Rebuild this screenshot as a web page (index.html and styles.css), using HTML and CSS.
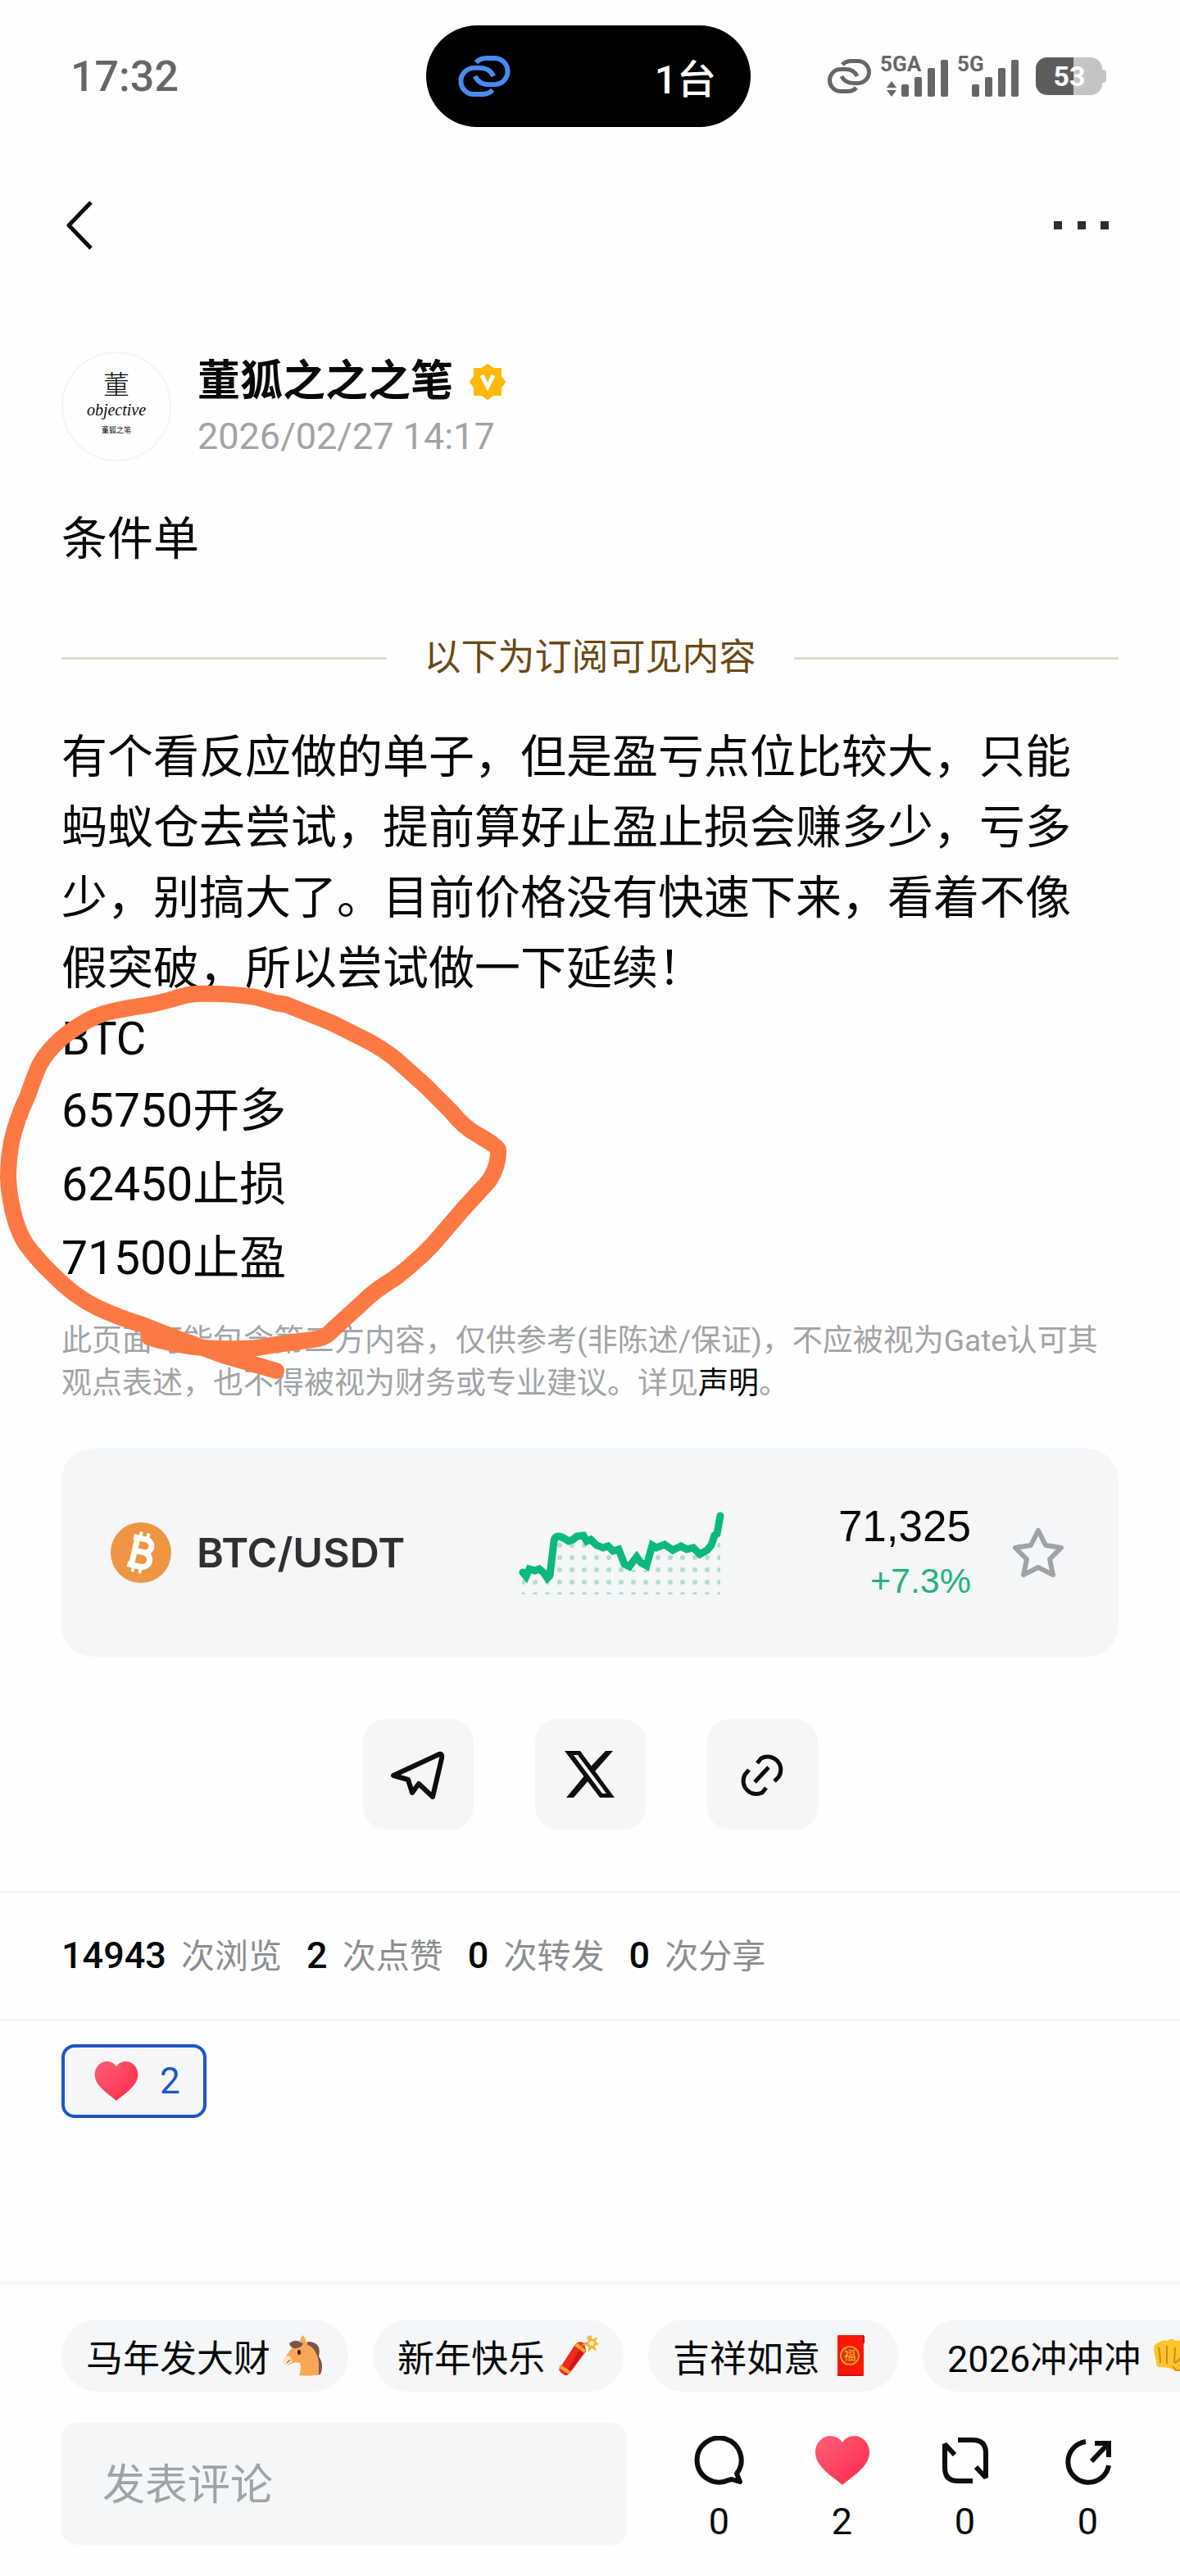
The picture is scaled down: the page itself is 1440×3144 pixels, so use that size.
FILE: index.html
```html
<!DOCTYPE html>
<html lang="zh-CN">
<head>
  <meta charset="UTF-8">
  <meta name="viewport" content="width=device-width, initial-scale=1.0">
  <title>条件单</title>
  <link rel="stylesheet" href="styles.css">
</head>
<body>
  <!-- Status bar -->
  <div class="status-bar">
    <div class="clock">17:32</div>
    <div class="island">
      <svg class="island-icon" viewBox="0 0 55 42" fill="none" stroke="#4a8af4" stroke-width="5">
        <path d="M19 7Q23 2.500 30 2.500H38A13.500 13.500 0 0 1 38 29.500H32Q22 29.500 18 21"/>
        <path d="M36 35Q32 39.500 25 39.500H17A13.500 13.500 0 0 1 17 12.500H23Q33 12.500 37 21"/>
      </svg>
      <span>1台</span>
    </div>
    <div class="indicators">
      <svg width="55" height="42" viewBox="0 0 55 42" fill="none" stroke="#666" stroke-width="5">
        <path d="M19 7Q23 2.500 30 2.500H38A13.500 13.500 0 0 1 38 29.500H32Q22 29.500 18 21"/>
        <path d="M36 35Q32 39.500 25 39.500H17A13.500 13.500 0 0 1 17 12.500H23Q33 12.500 37 21"/>
      </svg>
      <svg class="signal" width="84" height="68" viewBox="0 -8 84 68">
        <text x="0" y="20">5GA</text>
        <path d="M14 32L20 40H8ZM8 43H20L14 51Z"/>
        <rect x="26" y="36" width="9" height="15" rx="2"/>
        <rect x="42" y="27" width="9" height="24" rx="2"/>
        <rect x="58" y="16" width="9" height="35" rx="2"/>
        <rect x="74" y="6" width="9" height="45" rx="2"/>
      </svg>
      <svg class="signal" width="76" height="68" viewBox="0 -8 76 68">
        <text x="0" y="20">5G</text>
        <rect x="18" y="36" width="9" height="15" rx="2"/>
        <rect x="34" y="27" width="9" height="24" rx="2"/>
        <rect x="50" y="16" width="9" height="35" rx="2"/>
        <rect x="66" y="6" width="9" height="45" rx="2"/>
      </svg>
      <svg class="battery" width="86" height="46" viewBox="0 0 86 46">
        <rect width="81" height="46" rx="14" fill="#c4c4c4"/>
        <path d="M80 15h2q4 0 4 4v8q0 4-4 4h-2z" fill="#c4c4c4"/>
        <path d="M14 0H46V46H14A14 14 0 0 1 0 32V14A14 14 0 0 1 14 0Z" fill="#5c5c5c"/>
        <text x="41" y="35" text-anchor="middle">53</text>
      </svg>
    </div>
  </div>

  <!-- Navigation -->
  <nav class="nav">
    <button class="icon-btn" aria-label="返回">
      <svg width="34" height="60" viewBox="0 0 34 60" fill="none" stroke="#0b0d0e" stroke-width="5" stroke-linejoin="round">
        <path d="M31 2L4 30L31 58"/>
      </svg>
    </button>
    <button class="icon-btn" aria-label="更多">
      <svg width="74" height="10" viewBox="0 0 74 10" fill="#2b2e30">
        <rect x="0" width="10" height="10"/>
        <rect x="29" width="10" height="10"/>
        <rect x="57" width="10" height="10"/>
      </svg>
    </button>
  </nav>

  <main>
    <article class="post">
      <!-- Author -->
      <header class="author">
        <div class="avatar">
          <span class="avatar-mark">董</span>
          <span class="avatar-word">objective</span>
          <span class="avatar-name">董狐之笔</span>
        </div>
        <div>
          <div class="author-name">
            董狐之之之笔
            <svg width="44" height="44" viewBox="0 0 44 44">
              <path d="M22 1L29 6H38V15L43 22L38 29V38H29L22 43L15 38H6V29L1 22L6 15V6H15Z" fill="#fdb90b" stroke="#fdb90b" stroke-width="2" stroke-linejoin="round"/>
              <path d="M15 14L22 28L29 14" fill="none" stroke="#fff" stroke-width="5"/>
            </svg>
          </div>
          <time class="author-date">2026/02/27 14:17</time>
        </div>
      </header>

      <h1 class="post-title">条件单</h1>
      <div class="divider">以下为订阅可见内容</div>

      <!-- Post text with the marker circle over it -->
      <div class="post-body">
        <p class="text">有个看反应做的单子，但是盈亏点位比较大，只能蚂蚁仓去尝试，提前算好止盈止损会赚多少，亏多少，别搞大了。目前价格没有快速下来，看着不像假突破，所以尝试做一下延续！</p>
        <p>BTC</p>
        <p class="level">65750开多</p>
        <p class="level">62450止损</p>
        <p class="level">71500止盈</p>
        <p class="disclaimer">此页面可能包含第三方内容，仅供参考(非陈述/保证)，不应被视为Gate认可其观点表述，也不得被视为财务或专业建议。详见<a href="#">声明</a>。</p>
        <svg class="marker" width="640" height="490" viewBox="0 1200 640 490" fill="none" stroke="#fd7943" stroke-width="20" stroke-linecap="round" stroke-linejoin="round">
          <path d="M182 1632L188 1634Q206 1639 230 1643Q262 1647 294 1646Q314 1646 331 1642L388 1634Q398 1632 406 1623L441 1591Q458 1574 482 1560Q508 1540 528 1519L565 1476L597 1441Q609 1422 608 1403Q607 1399 583 1385Q566 1376 551 1357L519 1325L482 1292Q468 1281 450 1271L404 1248L349 1226L336 1224L312 1217Q276 1212 239 1213Q226 1214 212 1219Q198 1223 184 1226Q162 1229 138 1234Q120 1238 106 1246Q88 1256 73 1269Q56 1285 48 1300Q41 1316 34 1337Q20 1366 14 1394Q10 1416 10 1437Q11 1462 18 1487Q23 1505 32 1519Q47 1539 64 1555Q90 1582 119 1596Q145 1608 174 1617L220 1635L275 1655L337 1673"/>
        </svg>
      </div>

      <!-- Market card -->
      <section class="market">
        <svg width="75" height="75" viewBox="0 0 75 75">
          <circle cx="37" cy="37" r="37" fill="#ee9644"/>
          <g transform="rotate(13 37 37)" fill="none" stroke="#fff">
            <path d="M24 20H40A8 8 0 0 1 40 36H29M40 36A9 9 0 0 1 41 54H24M29 20V54" stroke-width="7"/>
            <path d="M32 12V22M41 12V22M32 53V62M41 53V62" stroke-width="4"/>
          </g>
        </svg>
        <span class="pair">BTC/USDT</span>
        <svg class="chart" width="252" height="106" viewBox="0 0 252 106">
          <defs>
            <pattern id="dots" x="-2" y="7" width="15" height="15" patternUnits="userSpaceOnUse">
              <circle cx="7" cy="7" r="3" fill="#b4dccf"/>
            </pattern>
          </defs>
          <path d="M4 77L10 80L34 84L45 37L62 38L80 36L108 50L120 54L134 74L156 74L164 46L188 52L223 52L246 20V104H4Z" fill="url(#dots)"/>
          <path d="M5 77L9 82L13 73L20 75L25 73L30 77L35 84L38 81L43 39Q44 33 49 33Q54 34 61 39Q66 38 71 33L79 32L83 39L88 37L95 44L103 47L109 45L115 51L122 49L129 67L135 70L144 58L149 65L156 69L163 44L168 47L178 43L188 50L198 45L205 49L213 47L221 55L230 50L235 44L239 32L242 30L246 8" fill="none" stroke="#0ab97d" stroke-width="9" stroke-linecap="round"/>
        </svg>
        <div class="quote">
          <div class="price">71,325</div>
          <div class="change">+7.3%</div>
        </div>
        <button class="icon-btn" aria-label="收藏">
          <svg width="64" height="62" viewBox="0 0 64 62" fill="none" stroke="#a0a3a5" stroke-width="6" stroke-linejoin="round">
            <path d="M32 4L41 22L60 25L46 39L50 58L32 49L14 58L18 39L4 25L23 22Z"/>
          </svg>
        </button>
      </section>

      <!-- Share -->
      <div class="share">
        <button class="share-btn" aria-label="Telegram">
          <svg width="68" height="60" viewBox="0 0 68 60" fill="none" stroke="#0b0d0e" stroke-width="6" stroke-linejoin="round">
            <path d="M4 31L60 5Q64 4 63 10L52 57L35 41L27 52L22 36Z"/>
          </svg>
        </button>
        <button class="share-btn" aria-label="X">
          <svg width="62" height="57" viewBox="0 0 62 57">
            <path d="M0 0H19L61 57H43ZM11 5L46 52H51L16 5Z" fill="#0b0d0e" fill-rule="evenodd"/>
            <path d="M50 0H59L36 26L31 20ZM2 57H11L31 34L26 28Z" fill="#0b0d0e"/>
          </svg>
        </button>
        <button class="share-btn" aria-label="复制链接">
          <svg width="56" height="56" viewBox="0 0 56 56" fill="none" stroke="#0b0d0e" stroke-width="5">
            <path d="M22 14L27 8A16 16 0 0 1 48 31L43 36M33 44L28 50A16 16 0 0 1 7 28L12 22M19 37L36 19"/>
          </svg>
        </button>
      </div>
    </article>

    <div class="stats">
      <span><b>14943</b> 次浏览</span>
      <span><b>2</b> 次点赞</span>
      <span><b>0</b> 次转发</span>
      <span><b>0</b> 次分享</span>
    </div>

    <button class="reaction">
      <svg width="54" height="48" viewBox="0 0 66 60">
        <defs>
          <linearGradient id="heart" x1="0" y1="0" x2="1" y2="1">
            <stop offset="0" stop-color="#ff6078"/>
            <stop offset="1" stop-color="#fd2748"/>
          </linearGradient>
        </defs>
        <path d="M33 60C22 50 0 38 0 20C0 8 9 0 18 0C25 0 30 3 33 8C36 3 41 0 48 0C57 0 66 8 66 20C66 38 44 50 33 60Z" fill="url(#heart)"/>
      </svg>
      2
    </button>
  </main>

  <!-- Comment bar -->
  <footer class="comment-bar">
    <div class="chips">
      <button class="chip">马年发大财
        <svg width="50" height="50" viewBox="0 0 50 50">
          <path d="M30 8Q48 8 44 26Q51 36 46 48L38 49L28 20Z" fill="#7c5346"/>
          <path d="M24 0Q29 4 29 11Q42 16 44 34L44 48Q32 51 20 49Q23 42 21 34Q14 32 8 36Q0 37 1 31Q3 27 8 20Q12 13 20 11Q21 5 24 0Z" fill="#faa755"/>
          <path d="M1 30Q3 26 8 25L12 32L7 36Q0 37 1 30Z" fill="#fbe3bd"/>
          <path d="M22 9Q16 4 8 10Q10 17 17 16Q23 15 25 10Z" fill="#7c5346"/>
          <ellipse cx="20" cy="21" rx="2" ry="3" fill="#222"/>
          <path d="M5 34L9 30" stroke="#333" stroke-width="1"/>
        </svg>
      </button>
      <button class="chip">新年快乐
        <svg width="51" height="50" viewBox="0 0 51 50">
          <path d="M27 14L35 20L14 48Q7 51 2 42L22 11Q27 6 33 10L35 20Z" fill="#f4291c"/>
          <path d="M30 13L35 17L13 48L9 49Z" fill="#c9171b"/>
          <path d="M4 36L16 44L14 48L2 40ZM21 13L33 22L35 18L24 9Z" fill="#f8a52c"/>
          <path d="M30 13Q35 8 40 10" fill="none" stroke="#c99a5b" stroke-width="2"/>
          <path d="M41 0L43 5L49 2L47 8L51 11L46 13L48 20L42 16L38 21L38 14L33 12L38 8L36 2Z" fill="#fcb63b"/>
          <circle cx="42" cy="10" r="3" fill="#fff0a0"/>
        </svg>
      </button>
      <button class="chip">吉祥如意
        <svg width="50" height="50" viewBox="0 0 50 50">
          <rect x="6" width="32" height="50" rx="1" fill="#fb1708"/>
          <path d="M6 48H37V50H6ZM37 0V10L39 10V1Z" fill="#c01818"/>
          <circle cx="21" cy="25" r="11" fill="#df2c12" stroke="#f89b22" stroke-width="2"/>
          <text x="21" y="30" text-anchor="middle" font-size="15" fill="#fbb62f">福</text>
        </svg>
      </button>
      <button class="chip">2026冲冲冲
        <svg width="50" height="50" viewBox="0 0 50 50">
          <path d="M1 18Q1 10 7 9Q12 5 17 7Q23 2 28 7Q35 5 38 12L49 20V42L28 44Q20 39 10 39Q4 40 4 33Z" fill="#fdc52d"/>
          <path d="M7 15Q9 24 9 34M17 13V35M27 15L26 33M26 34Q33 31 37 22M24 38L28 43L49 42" fill="none" stroke="#cf8a18" stroke-width="2"/>
        </svg>
      </button>
    </div>

    <div class="actions">
      <input class="comment-input" type="text" placeholder="发表评论" aria-label="发表评论">
      <button class="action">
        <svg width="66" height="60" viewBox="0 0 66 60" fill="none" stroke="#0b0d0e" stroke-width="6" stroke-linejoin="round">
          <path d="M54 46A27 27 0 1 0 44 54L48 53L58 56Z"/>
        </svg>
        0
      </button>
      <button class="action">
        <svg width="66" height="60" viewBox="0 0 66 60">
          <path d="M33 60C22 50 0 38 0 20C0 8 9 0 18 0C25 0 30 3 33 8C36 3 41 0 48 0C57 0 66 8 66 20C66 38 44 50 33 60Z" fill="url(#heart)"/>
        </svg>
        2
      </button>
      <button class="action">
        <svg width="66" height="60" viewBox="0 0 66 60" fill="none" stroke="#0b0d0e" stroke-width="6" stroke-linejoin="bevel">
          <path d="M24 5H42Q58 5 58 21V51L46 38M42 55H24Q8 55 8 39V10L20 23"/>
        </svg>
        0
      </button>
      <button class="action">
        <svg width="66" height="60" viewBox="0 0 66 60" fill="none" stroke="#0b0d0e" stroke-width="6">
          <path d="M30 7A25 25 0 1 0 58 36M37 31L57 10M41 9H58V26"/>
        </svg>
        0
      </button>
    </div>
  </footer>
</body>
</html>
```
FILE: styles.css
```css
* {
  box-sizing: border-box;
}

body {
  display: flex;
  flex-direction: column;
  min-height: 100vh;
  margin: 0;
  font-family: Roboto, "Noto Sans CJK SC", sans-serif;
  background-color: #fefefe;
  color: #070909;
  overflow-x: hidden;
}

h1,
p {
  margin: 0;
}

button {
  border: none;
  padding: 0;
  background: none;
  color: inherit;
  font-family: inherit;
  cursor: pointer;
}

svg {
  display: block;
  flex-shrink: 0;
}

/* Status bar */
.status-bar {
  display: grid;
  grid-template-columns: 1fr auto 1fr;
  align-items: center;
  padding: 31px 90px 0 86px;
}

.clock {
  font-size: 52px;
  font-weight: 500;
  color: #666;
}

.island {
  display: flex;
  justify-content: space-between;
  align-items: center;
  width: 396px;
  height: 124px;
  padding: 0 42px 0 38px;
  border-radius: 62px;
  background-color: #000;
  color: #fff;
  font-size: 48px;
  font-weight: 500;
}

.island-icon {
  width: 66px;
  height: 50px;
}

.indicators {
  display: flex;
  justify-content: flex-end;
  align-items: center;
  gap: 10px;
}

.signal {
  fill: #666;
  font-size: 26px;
  font-weight: 700;
}

.battery {
  margin-left: 10px;
  font-size: 34px;
  font-weight: 700;
  fill: #fff;
}

/* Navigation */
.nav {
  display: flex;
  justify-content: space-between;
  align-items: center;
  height: 240px;
  padding: 0 80px;
}

/* Post */
.post {
  padding: 34px 75px 75px;
}

.author {
  display: flex;
  gap: 32px;
}

.avatar {
  display: flex;
  flex-direction: column;
  align-items: center;
  width: 134px;
  height: 134px;
  padding-top: 16px;
  border: 2px solid #f4f4f4;
  border-radius: 50%;
}

.avatar-mark {
  font-family: "Noto Sans CJK SC", sans-serif;
  font-size: 32px;
  font-weight: 300;
  line-height: 40px;
}

.avatar-word {
  font-family: "Liberation Serif", serif;
  font-size: 20px;
  font-style: italic;
  line-height: 26px;
}

.avatar-name {
  font-size: 9px;
  line-height: 24px;
}

.author-name {
  display: flex;
  align-items: center;
  gap: 20px;
  font-size: 52px;
  font-weight: 700;
  line-height: 74px;
}

.author-date {
  display: block;
  font-size: 45px;
  line-height: 60px;
  color: #a0a3a5;
}

.post-title {
  margin-top: 52px;
  font-size: 56px;
  font-weight: 400;
  line-height: 86px;
}

.divider {
  display: flex;
  align-items: center;
  gap: 46px;
  margin-top: 72px;
  font-size: 45px;
  line-height: 60px;
  color: #6b4913;
}

.divider::before,
.divider::after {
  content: "";
  flex: 1;
  height: 3px;
  background-color: #dcdccb;
}

.post-body {
  position: relative;
  margin-top: 48px;
  font-size: 56px;
  line-height: 86px;
}

.text {
  padding-right: 30px;
}

.level {
  font-size: 57px;
  line-height: 90px;
}

.disclaimer {
  margin-top: 30px;
  font-size: 37px;
  line-height: 52px;
  color: #a0a3a5;
}

.disclaimer a {
  color: #070909;
  text-decoration: none;
}

.marker {
  position: absolute;
  top: 319px;
  left: -75px;
  pointer-events: none;
}

/* Market card */
.market {
  display: flex;
  align-items: center;
  height: 254px;
  margin-top: 53px;
  padding: 0 66px 0 60px;
  border-radius: 38px;
  background-color: #f4f6f8;
}

.pair {
  margin-left: 30px;
  font-family: Inter, sans-serif;
  font-size: 50px;
  font-weight: 600;
  color: #2e3032;
}

.chart {
  margin: 0 auto;
}

.quote {
  margin-right: 50px;
  font-family: "Liberation Sans", sans-serif;
  text-align: right;
}

.price {
  font-size: 53px;
  line-height: 68px;
}

.change {
  font-size: 43px;
  line-height: 64px;
  color: #27b07f;
}

/* Share */
.share {
  display: flex;
  justify-content: center;
  gap: 75px;
  margin-top: 76px;
}

.share-btn {
  display: flex;
  justify-content: center;
  align-items: center;
  width: 135px;
  height: 135px;
  border-radius: 28px;
  background-color: #f4f6f8;
}

.stats {
  display: flex;
  gap: 30px;
  padding: 0 75px;
  border-top: 3px solid #f6f6f6;
  border-bottom: 3px solid #f6f6f6;
  font-size: 41px;
  line-height: 152px;
  color: #8a8d8f;
}

.stats b {
  margin-right: 8px;
  font-size: 45px;
  font-weight: 500;
  color: #070909;
}

.reaction {
  display: flex;
  align-items: center;
  gap: 26px;
  height: 90px;
  margin: 28px 75px 0;
  padding: 0 28px 0 36px;
  border: 4px solid #1f56c6;
  border-radius: 16px;
  background-color: #f4f6f8;
  font-size: 44px;
  color: #1f56c6;
}

/* Comment bar */
.comment-bar {
  margin-top: auto;
  padding: 43px 75px 36px;
  border-top: 4px solid #f6f6f6;
}

.chips {
  display: flex;
  gap: 30px;
  margin-right: -75px;
  overflow: hidden;
}

.chip {
  display: flex;
  flex-shrink: 0;
  align-items: center;
  gap: 15px;
  height: 88px;
  padding: 0 30px;
  border-radius: 44px;
  background-color: #f4f6f8;
  font-size: 45px;
}

.actions {
  display: flex;
  gap: 75px;
  margin-top: 38px;
}

.comment-input {
  flex: 1;
  min-width: 0;
  height: 149px;
  padding: 4px 50px 0;
  border: none;
  border-radius: 20px;
  background-color: #f4f6f8;
  font-family: inherit;
  font-size: 52px;
}

.comment-input::placeholder {
  color: #a0a3a5;
}

.action {
  display: flex;
  flex-direction: column;
  align-items: center;
  gap: 15px;
  width: 75px;
  padding-top: 16px;
  font-size: 45px;
  line-height: 60px;
}
```
